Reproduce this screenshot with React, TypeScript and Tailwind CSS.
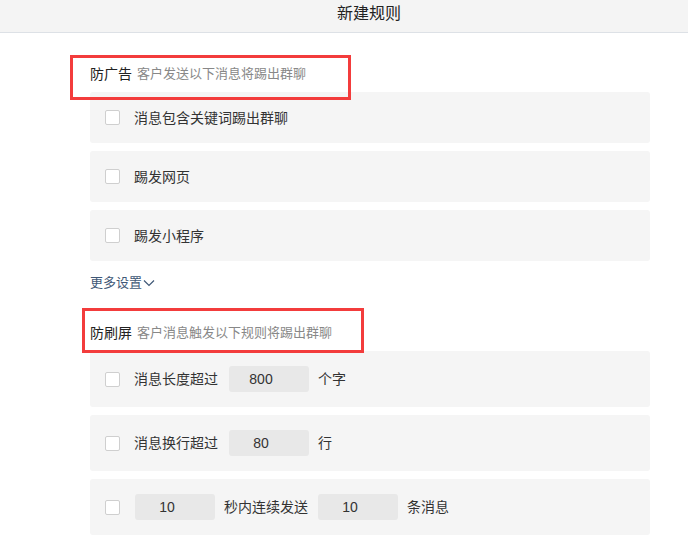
import React from 'react';

const Checkbox: React.FC = () => (
  <span className="block w-[15px] h-[15px] shrink-0 bg-white border border-[#cfcfcf] rounded-[2px]" />
);

const NumBox: React.FC<{ value: string }> = ({ value }) => (
  <span className="flex items-center justify-center w-20 h-[26px] pr-4 rounded-[3px] bg-[#e8e8e8] text-[14px] text-[#333]">
    {value}
  </span>
);

const SimpleRow: React.FC<{ label: string }> = ({ label }) => (
  <div className="h-[51px] bg-[#f5f5f5] rounded-[3px] flex items-center pl-[15px]">
    <Checkbox />
    <span className="ml-[14px] text-[14px] leading-5 text-[#333]">{label}</span>
  </div>
);

const RuleRow: React.FC<{ children: React.ReactNode }> = ({ children }) => (
  <div className="h-[56px] bg-[#f5f5f5] rounded-[3px] flex items-center pl-[15px] text-[14px] leading-5 text-[#333]">
    <Checkbox />
    {children}
  </div>
);

export default function App() {
  return (
    <div className="w-[688px] h-[554px] bg-white overflow-hidden font-['Liberation_Sans','Noto_Sans_CJK_SC',sans-serif]">
      {/* header */}
      <div className="h-[33px] bg-[#f4f4f4] border-b border-[#dde1e6] flex items-center justify-center">
        <span className="ml-[50px] text-[16px] leading-5 text-[#222] -mt-1">新建规则</span>
      </div>

      <div className="pl-[90px] pr-[38px] pt-[31px]">
        {/* 防广告 */}
        <div className="relative h-5 flex items-center">
          <span className="text-[14px] text-[#222]">防广告</span>
          <span className="ml-[5px] text-[13px] text-[#888]">客户发送以下消息将踢出群聊</span>
          <div className="absolute left-[-20px] top-[-9px] w-[281px] h-[45px] border-[3px] border-[#f33c3c] z-10" />
        </div>

        <div className="mt-2 flex flex-col gap-2">
          <SimpleRow label="消息包含关键词踢出群聊" />
          <SimpleRow label="踢发网页" />
          <SimpleRow label="踢发小程序" />
        </div>

        <div className="mt-3 h-5 flex items-center text-[13px] text-[#3f5877]">
          更多设置
          <svg width="12" height="8" viewBox="0 0 12 8" className="ml-[1px]">
            <path d="M1 1.5 L6 6.5 L11 1.5" fill="none" stroke="#3f5877" strokeWidth="1.2" />
          </svg>
        </div>

        {/* 防刷屏 */}
        <div className="relative mt-[30px] h-5 flex items-center">
          <span className="text-[14px] text-[#222]">防刷屏</span>
          <span className="ml-[5px] text-[13px] text-[#888]">客户消息触发以下规则将踢出群聊</span>
          <div className="absolute left-[-8px] top-[-15px] w-[282px] h-[45px] border-[3px] border-[#f33c3c] z-10" />
        </div>

        <div className="mt-2 flex flex-col gap-2">
          <RuleRow>
            <span className="ml-[14px]">消息长度超过</span>
            <span className="ml-[11px]"><NumBox value="800" /></span>
            <span className="ml-[9px]">个字</span>
          </RuleRow>
          <RuleRow>
            <span className="ml-[14px]">消息换行超过</span>
            <span className="ml-[11px]"><NumBox value="80" /></span>
            <span className="ml-[9px]">行</span>
          </RuleRow>
          <RuleRow>
            <span className="ml-[15px]"><NumBox value="10" /></span>
            <span className="ml-[9px]">秒内连续发送</span>
            <span className="ml-[10px]"><NumBox value="10" /></span>
            <span className="ml-[9px]">条消息</span>
          </RuleRow>
        </div>
      </div>
    </div>
  );
}
